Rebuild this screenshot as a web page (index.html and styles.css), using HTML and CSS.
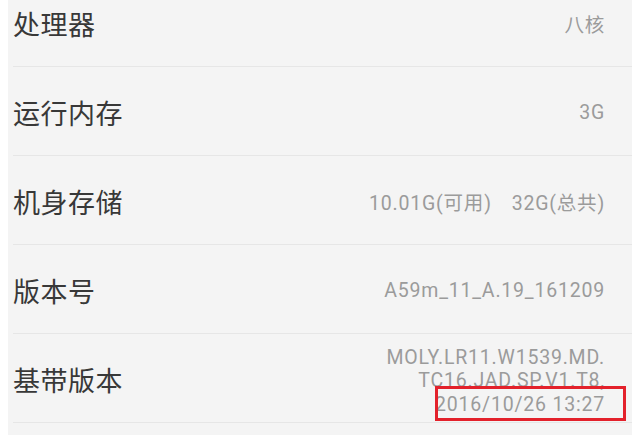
FILE: index.html
```html
<!DOCTYPE html>
<html lang="zh">
<head>
<meta charset="utf-8">
<link rel="stylesheet" href="styles.css">
</head>
<body>
<div class="page">
  <ul class="list">
    <li class="row">
      <span class="label">处理器</span>
      <span class="value">八核</span>
    </li>
    <li class="row">
      <span class="label">运行内存</span>
      <span class="value">3G</span>
    </li>
    <li class="row">
      <span class="label">机身存储</span>
      <span class="value">10.01G(可用)<span class="gap"></span>32G(总共)</span>
    </li>
    <li class="row">
      <span class="label">版本号</span>
      <span class="value">A59m_11_A.19_161209</span>
    </li>
    <li class="row">
      <span class="label">基带版本</span>
      <span class="value multi">
        <span class="line">MOLY.LR11.W1539.MD.</span>
        <span class="line">TC16.JAD.SP.V1.T8,</span>
        <span class="line marked">2016/10/26 13:27<span class="mark"></span></span>
      </span>
    </li>
  </ul>
</div>
</body>
</html>
```

FILE: styles.css
```css
html, body {
  margin: 0;
  padding: 0;
  background: #ffffff;
  overflow: hidden;
}

.page {
  margin-left: 8px;
  height: 435px;
  background: #f4f4f4;
  overflow: hidden;
}

.list {
  list-style: none;
  margin: -22px 0 0 5px;
  padding: 0;
}

.row {
  box-sizing: border-box;
  height: 89px;
  display: flex;
  align-items: center;
  justify-content: space-between;
  padding: 2px 27px 0 0;
  border-bottom: 1px solid #e6e6e6;
}

.label {
  font-family: "Noto Sans CJK SC", "Noto Sans", sans-serif;
  font-size: 27px;
  color: #383838;
  letter-spacing: 0.5px;
}

.value {
  font-family: Roboto, "Noto Sans CJK SC", sans-serif;
  font-size: 19.5px;
  color: #9b9b9b;
  text-align: right;
  letter-spacing: 0.8px;
}

.gap {
  display: inline-block;
  width: 20px;
}

.multi {
  display: flex;
  flex-direction: column;
  align-items: flex-end;
  line-height: 23.5px;
  padding-top: 4px;
}

.line {
  display: block;
}

.marked {
  position: relative;
}

.mark {
  position: absolute;
  box-sizing: border-box;
  right: -21px;
  width: 191px;
  top: -7px;
  height: 35px;
  border: 3px solid #e3212b;
}
```
